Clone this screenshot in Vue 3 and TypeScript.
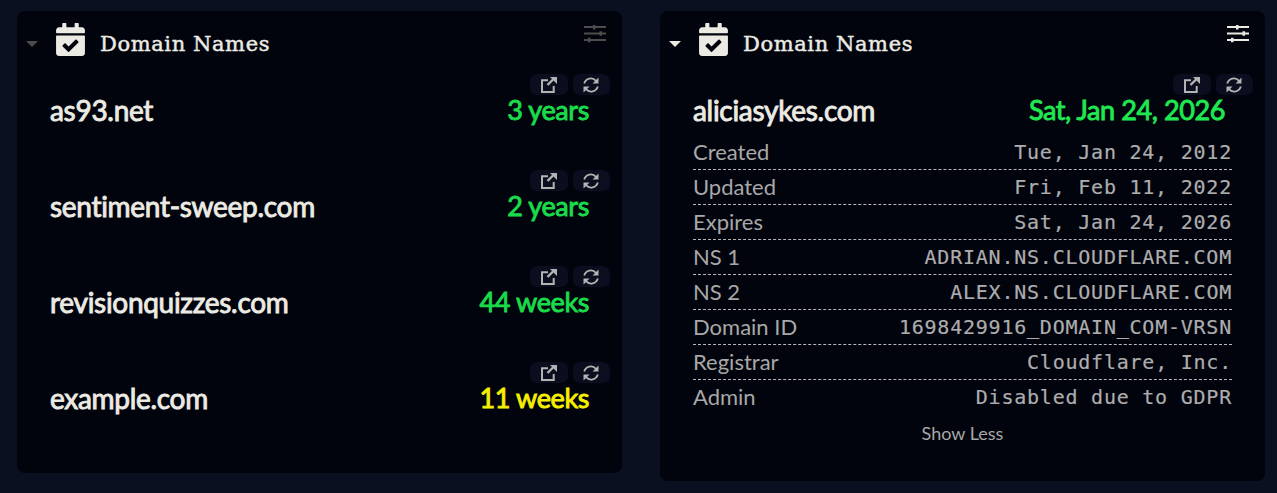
<script setup lang="ts">
interface Domain { name: string; left: string; tone: string }
interface Row { label: string; value: string }

const domains: Domain[] = [
  { name: 'as93.net', left: '3 years', tone: 'green' },
  { name: 'sentiment-sweep.com', left: '2 years', tone: 'green' },
  { name: 'revisionquizzes.com', left: '44 weeks', tone: 'green' },
  { name: 'example.com', left: '11 weeks', tone: 'yellow' },
]

const rows: Row[] = [
  { label: 'Created', value: 'Tue, Jan 24, 2012' },
  { label: 'Updated', value: 'Fri, Feb 11, 2022' },
  { label: 'Expires', value: 'Sat, Jan 24, 2026' },
  { label: 'NS 1', value: 'ADRIAN.NS.CLOUDFLARE.COM' },
  { label: 'NS 2', value: 'ALEX.NS.CLOUDFLARE.COM' },
  { label: 'Domain ID', value: '1698429916_DOMAIN_COM-VRSN' },
  { label: 'Registrar', value: 'Cloudflare, Inc.' },
  { label: 'Admin', value: 'Disabled due to GDPR' },
]
const calendar = 'M436 160H12c-6.6 0-12-5.4-12-12v-36c0-26.5 21.5-48 48-48h48V12c0-6.6 5.4-12 12-12h40c6.6 0 12 5.4 12 12v52h128V12c0-6.6 5.4-12 12-12h40c6.6 0 12 5.4 12 12v52h48c26.5 0 48 21.5 48 48v36c0 6.6-5.4 12-12 12zM12 192h424c6.6 0 12 5.4 12 12v260c0 26.5-21.5 48-48 48H48c-26.5 0-48-21.5-48-48V204c0-6.6 5.4-12 12-12zm333.3 95.9l-28.2-28.4c-4.7-4.7-12.3-4.7-17-.1L194.1 364.3l-45.9-46.3c-4.7-4.7-12.3-4.7-17-.1l-28.4 28.2c-4.7 4.7-4.7 12.3-.1 17l82.6 83.3c4.7 4.7 12.3 4.7 17 .1l141.9-140.9c4.8-4.7 4.8-12.3.1-17z'
</script>

<template>
  <main class="page">
    <section class="card card-list">
      <header class="head">
        <span class="arrow dim"></span>
        <svg class="cal" viewBox="0 0 448 512"><path fill="#ecebe3" :d="calendar" /></svg>
        <h2 class="title">Domain Names</h2>
        <svg class="sliders dim-icon" viewBox="0 0 22 18">
          <path d="M0 2h22M0 8.500h22M0 15h22" stroke="currentColor" stroke-width="2.200" fill="none" />
          <path d="M9 0h2.500v4.500h-2.500zM15.500 6.200h2.500v4.500h-2.500zM4 12.700h2.500v4.500h-2.500z" fill="currentColor" />
        </svg>
      </header>
      <div class="list">
        <article v-for="d in domains" :key="d.name" class="domain">
          <div class="actions">
            <button class="act">
              <svg viewBox="0 0 16 16"><path d="M7 3.300H1v11.700h11.700V9" fill="none" stroke="currentColor" stroke-width="2" /><path d="M6.500 8l6-6" fill="none" stroke="currentColor" stroke-width="2.400" /><path d="M9 0h7v7z" fill="currentColor" /></svg>
            </button>
            <button class="act">
              <svg viewBox="0 0 16 16"><path d="M1.200 6.500A6.900 6.900 0 0 1 13 3.800M14.800 9.500A6.900 6.900 0 0 1 3 12.200" fill="none" stroke="currentColor" stroke-width="1.800" /><path d="M15.500 0.500v6h-6zM0.500 15.500v-6h6z" fill="currentColor" /></svg>
            </button>
          </div>
          <div class="main-line">
            <span class="name">{{ d.name }}</span>
            <span class="left" :class="d.tone">{{ d.left }}</span>
          </div>
        </article>
      </div>
    </section>

    <section class="card card-detail">
      <header class="head">
        <span class="arrow"></span>
        <svg class="cal" viewBox="0 0 448 512"><path fill="#ecebe3" :d="calendar" /></svg>
        <h2 class="title">Domain Names</h2>
        <svg class="sliders" viewBox="0 0 22 18">
          <path d="M0 2h22M0 8.500h22M0 15h22" stroke="currentColor" stroke-width="2.200" fill="none" />
          <path d="M9 0h2.500v4.500h-2.500zM15.500 6.200h2.500v4.500h-2.500zM4 12.700h2.500v4.500h-2.500z" fill="currentColor" />
        </svg>
      </header>
      <div class="detail">
        <div class="actions">
          <button class="act">
            <svg viewBox="0 0 16 16"><path d="M7 3.300H1v11.700h11.700V9" fill="none" stroke="currentColor" stroke-width="2" /><path d="M6.500 8l6-6" fill="none" stroke="currentColor" stroke-width="2.400" /><path d="M9 0h7v7z" fill="currentColor" /></svg>
          </button>
          <button class="act">
            <svg viewBox="0 0 16 16"><path d="M1.200 6.500A6.900 6.900 0 0 1 13 3.800M14.800 9.500A6.900 6.900 0 0 1 3 12.200" fill="none" stroke="currentColor" stroke-width="1.800" /><path d="M15.500 0.500v6h-6zM0.500 15.500v-6h6z" fill="currentColor" /></svg>
          </button>
        </div>
        <div class="main-line">
          <span class="name">aliciasykes.com</span>
          <span class="left bright">Sat, Jan 24, 2026</span>
        </div>
        <ul class="rows">
          <li v-for="r in rows" :key="r.label" class="row">
            <span class="label">{{ r.label }}</span>
            <span class="value">{{ r.value }}</span>
          </li>
        </ul>
        <p class="more">Show Less</p>
      </div>
    </section>
  </main>
</template>

<style>
html, body { background: #0b1021; }
</style>

<style scoped>
.page {
  display: grid;
  grid-template-columns: 605px 605px;
  gap: 38px;
  align-items: start;
  padding: 11px 17px 0;
  box-sizing: border-box;
  width: 1277px;
  height: 493px;
  overflow: hidden;
  background: #0b1021;
  font-family: Lato, "Open Sans", sans-serif;
}
.card { background: #01040d; border-radius: 8px; box-sizing: border-box; }
.card-list { height: 462px; }
.card-detail { height: 470px; }
.head { display: flex; align-items: center; height: 63px; padding: 0 16px 0 9px; color: #ecebe3; }
.arrow {
  width: 0; height: 0; margin-top: 2px;
  border-left: 6.500px solid transparent;
  border-right: 6.500px solid transparent;
  border-top: 6.500px solid #ecebe3;
}
.arrow.dim { border-top-color: #4b4b4b; }
.cal { width: 29px; height: 33px; margin: -6px 15px 0 18px; flex: none; }
.title {
  margin: 2px 0 0;
  font: 400 21px "DejaVu Serif", serif;
  letter-spacing: 0.600px;
  -webkit-text-stroke: 0.45px #ecebe3;
  color: #ecebe3;
  flex: 1;
}
.sliders { width: 22px; height: 18px; margin: -18px 0 0; color: #ecebe3; }
.dim-icon { color: #4d4d4d; }
.actions { display: flex; justify-content: flex-end; gap: 5px; height: 21px; padding-right: 12px; }
.act {
  width: 37.500px; height: 21px; padding: 0;
  border: 0; border-radius: 7px;
  background: #0a0e1e; color: #b4b4b4;
  display: flex; align-items: center; justify-content: center;
}
.act svg { width: 16px; height: 16px; }
.domain { margin-bottom: 46px; }
.main-line {
  display: flex; justify-content: space-between; align-items: center;
  height: 29px; padding: 0 33px;
}
.detail .main-line { padding: 0 40px 0 33px; }
.name { font-size: 28px; font-weight: 400; color: #ecebe3; letter-spacing: -0.300px; -webkit-text-stroke: 0.9px #ecebe3; }
.left { font-size: 27px; font-weight: 400; letter-spacing: -0.400px; -webkit-text-stroke: 0.9px currentColor; }
.green { color: #1adc4b; }
.yellow { color: #f6f000; }
.bright { color: #1fe851; }
.rows { list-style: none; margin: 11px 0 0; padding: 0 33px; }
.row {
  display: flex; justify-content: space-between; align-items: center;
  padding-bottom: 1px; height: 33px;
  border-bottom: 1px dashed #b8b8b8;
}
.row:last-child { border-bottom: 0; }
.label { font-size: 22px; color: #a8a8a8; }
.value { font: 400 20px "DejaVu Sans Mono", monospace; letter-spacing: 0.770px; color: #adadad; -webkit-text-stroke: 0.2px #adadad; }
.more { margin: 8px 0 0; text-align: center; font-size: 18px; color: #a8a8a8; }
</style>
